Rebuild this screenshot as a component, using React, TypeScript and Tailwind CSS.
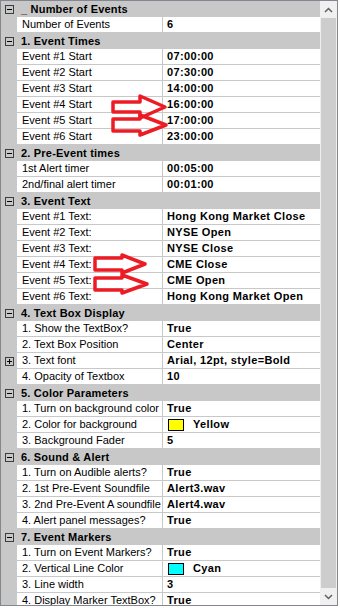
type Row =
  | { kind: 'cat'; label: string }
  | { kind: 'prop'; label: string; value: string; swatch?: string; expand?: boolean };

const rows: Row[] = [
  { kind: 'cat', label: '_ Number of Events' },
  { kind: 'prop', label: 'Number of Events', value: '6' },
  { kind: 'cat', label: '1. Event Times' },
  { kind: 'prop', label: 'Event #1 Start', value: '07:00:00' },
  { kind: 'prop', label: 'Event #2 Start', value: '07:30:00' },
  { kind: 'prop', label: 'Event #3 Start', value: '14:00:00' },
  { kind: 'prop', label: 'Event #4 Start', value: '16:00:00' },
  { kind: 'prop', label: 'Event #5 Start', value: '17:00:00' },
  { kind: 'prop', label: 'Event #6 Start', value: '23:00:00' },
  { kind: 'cat', label: '2. Pre-Event times' },
  { kind: 'prop', label: '1st Alert timer', value: '00:05:00' },
  { kind: 'prop', label: '2nd/final alert timer', value: '00:01:00' },
  { kind: 'cat', label: '3. Event Text' },
  { kind: 'prop', label: 'Event #1 Text:', value: 'Hong Kong Market Close' },
  { kind: 'prop', label: 'Event #2 Text:', value: 'NYSE Open' },
  { kind: 'prop', label: 'Event #3 Text:', value: 'NYSE Close' },
  { kind: 'prop', label: 'Event #4 Text:', value: 'CME Close' },
  { kind: 'prop', label: 'Event #5 Text:', value: 'CME Open' },
  { kind: 'prop', label: 'Event #6 Text:', value: 'Hong Kong Market Open' },
  { kind: 'cat', label: '4. Text Box Display' },
  { kind: 'prop', label: '1. Show the TextBox?', value: 'True' },
  { kind: 'prop', label: '2. Text Box Position', value: 'Center' },
  { kind: 'prop', label: '3. Text font', value: 'Arial, 12pt, style=Bold', expand: true },
  { kind: 'prop', label: '4. Opacity of Textbox', value: '10' },
  { kind: 'cat', label: '5. Color Parameters' },
  { kind: 'prop', label: '1. Turn on background color', value: 'True' },
  { kind: 'prop', label: '2. Color for background', value: 'Yellow', swatch: 'yellow' },
  { kind: 'prop', label: '3. Background Fader', value: '5' },
  { kind: 'cat', label: '6. Sound & Alert' },
  { kind: 'prop', label: '1. Turn on Audible alerts?', value: 'True' },
  { kind: 'prop', label: '2. 1st Pre-Event Soundfile', value: 'Alert3.wav' },
  { kind: 'prop', label: '3. 2nd Pre-Event A soundfile', value: 'Alert4.wav' },
  { kind: 'prop', label: '4. Alert panel messages?', value: 'True' },
  { kind: 'cat', label: '7. Event Markers' },
  { kind: 'prop', label: '1. Turn on Event Markers?', value: 'True' },
  { kind: 'prop', label: '2. Vertical Line Color', value: 'Cyan', swatch: 'cyan' },
  { kind: 'prop', label: '3. Line width', value: '3' },
  { kind: 'prop', label: '4. Display Marker TextBox?', value: 'True' },
];

// little [-] / [+] box in the left margin
function Glyph({ plus }: { plus?: boolean }) {
  return (
    <svg width="9" height="9" className="block">
      <rect x="0.5" y="0.5" width="8" height="8" fill="none" stroke="#3c3c3c" />
      <line x1="2" y1="4.5" x2="7" y2="4.5" stroke="#000" />
      {plus && <line x1="4.5" y1="2" x2="4.5" y2="7" stroke="#000" />}
    </svg>
  );
}

// hollow block arrow, like the ones drawn in Paint
function arrow(x0: number, xb: number, xt: number, yc: number, h: number, H: number) {
  return `${x0},${yc - h} ${xb},${yc - h} ${xb},${yc - H} ${xt},${yc} ${xb},${yc + H} ${xb},${yc + h} ${x0},${yc + h}`;
}

function App() {
  return (
    <div className="w-[340px] h-[608px] bg-white" style={{ fontFamily: '"Liberation Sans", Arial, sans-serif' }}>
      <div className="w-[338px] h-[606px] border border-[#828790] flex overflow-hidden">
        {/* grid */}
        <div className="relative w-[319px] h-full overflow-hidden">
          {rows.map((r, i) =>
            r.kind === 'cat' ? (
              <div key={i} className="flex h-[16px] bg-[#c8c8c8]">
                <div className="w-[16px] flex items-center justify-center pl-[1px]">
                  <Glyph />
                </div>
                <div className="pl-[4px] text-[11px] leading-[16px] font-bold tracking-[0.2px] text-black whitespace-nowrap">{r.label}</div>
              </div>
            ) : (
              <div key={i} className="flex h-[16px]">
                <div className="w-[16px] bg-[#c8c8c8] flex items-center justify-center pl-[1px]">
                  {r.expand && <Glyph plus />}
                </div>
                <div className="w-[146px] border-r border-b border-[#c8c8c8] pl-[5px] text-[11px] leading-[15px] text-black whitespace-nowrap overflow-hidden">
                  {r.label}
                </div>
                <div className="flex-1 border-b border-[#c8c8c8] flex items-center text-[11px] leading-[15px] font-bold tracking-[0.35px] text-black whitespace-nowrap overflow-hidden">
                  {r.swatch ? (
                    <>
                      <span
                        className={`ml-[5px] w-[16px] h-[12px] border border-black ${r.swatch === 'yellow' ? 'bg-[#ffff00]' : 'bg-[#00ffff]'}`}
                      />
                      <span className="pl-[9px]">{r.value}</span>
                    </>
                  ) : (
                    <span className="pl-[4px]">{r.value}</span>
                  )}
                </div>
              </div>
            )
          )}

          <svg className="absolute inset-0 pointer-events-none" width="319" height="604">
            <g fill="none" stroke="#ed1c24" strokeWidth="3.5" strokeLinejoin="round">
              <polygon points={arrow(112, 139, 164, 106, 5, 11)} />
              <polygon points={arrow(112, 139, 165, 124, 6, 10)} />
              <polygon points={arrow(94, 121, 144, 263, 6, 9)} />
              <polygon points={arrow(94, 121, 146, 283, 6, 9)} />
            </g>
          </svg>
        </div>

        {/* scrollbar */}
        <div className="w-[17px] h-full bg-[#f0f0f0] flex flex-col">
          <div className="h-[17px] flex items-center justify-center">
            <svg width="9" height="6">
              <polyline points="1,5 4.5,1.5 8,5" fill="none" stroke="#606060" strokeWidth="1.5" />
            </svg>
          </div>
          <div className="flex-1 px-[1px]">
            <div className="h-full bg-[#cdcdcd]" />
          </div>
          <div className="h-[17px] flex items-center justify-center">
            <svg width="9" height="6">
              <polyline points="1,1 4.5,4.5 8,1" fill="none" stroke="#606060" strokeWidth="1.5" />
            </svg>
          </div>
        </div>
      </div>
    </div>
  );
}

export default App;
